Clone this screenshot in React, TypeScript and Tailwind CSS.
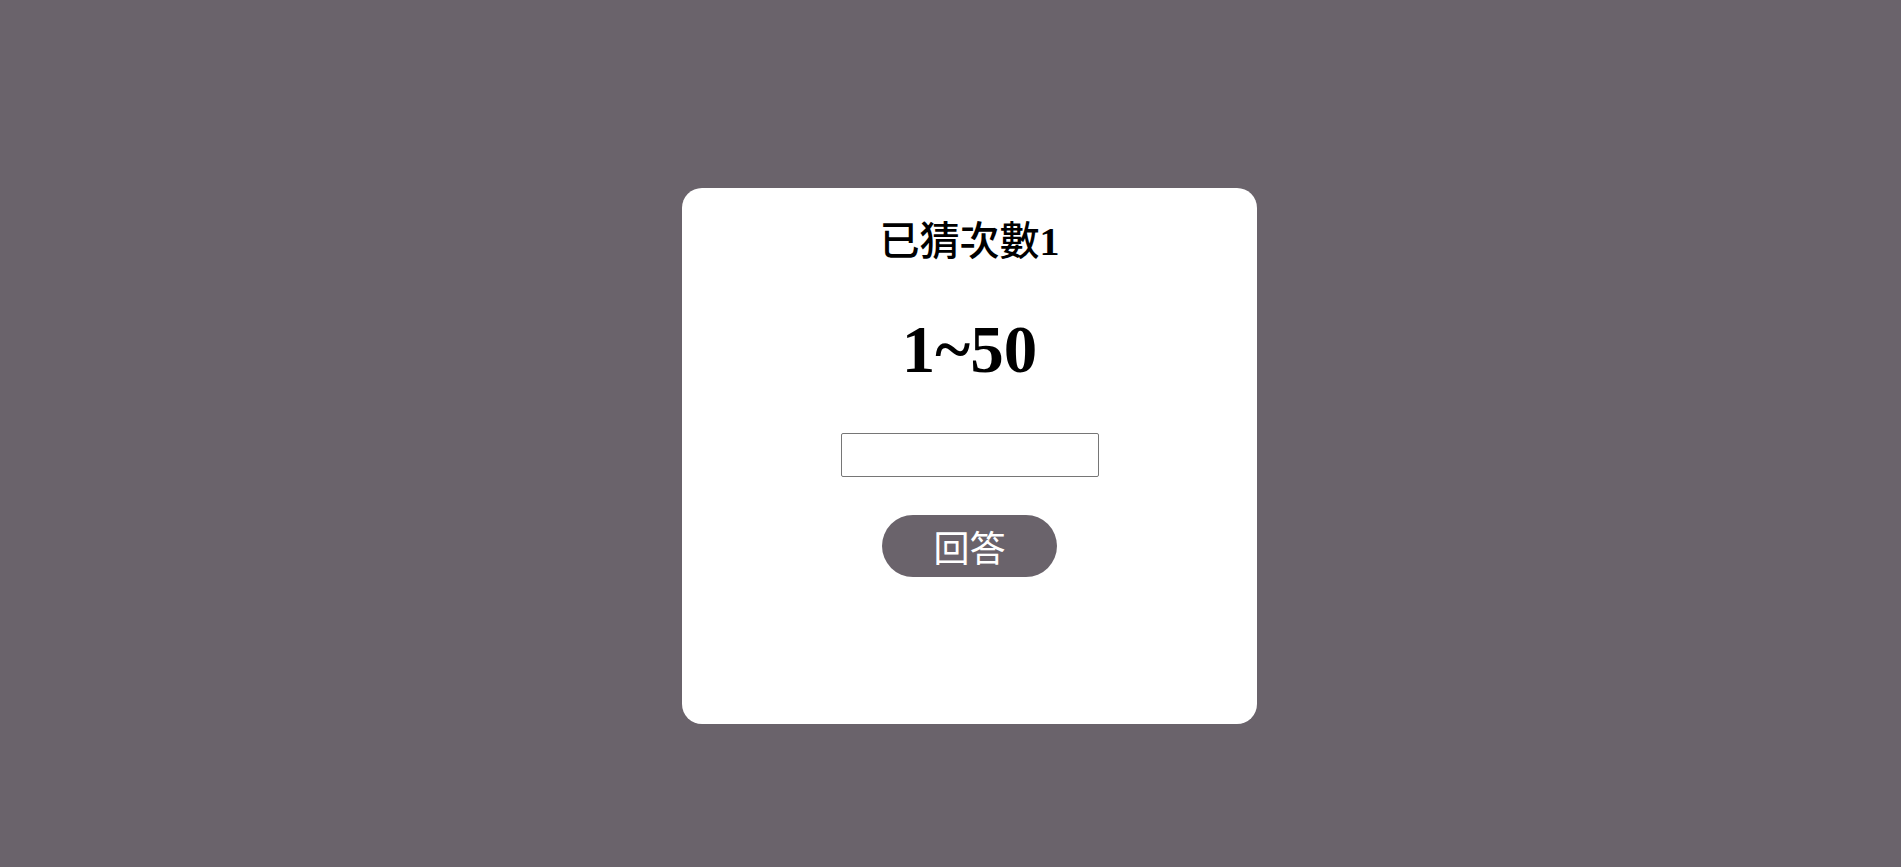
import React from "react";

export default function App() {
  return (
    <div className="min-h-screen w-full bg-[#6a636b] pt-[188px] pl-[682px]">
      <div className="flex h-[536px] w-[575px] flex-col items-center rounded-[20px] bg-white pt-[30px]">
        <h2 className="text-[40px] leading-[48px] font-medium text-black [font-family:'Liberation_Serif','Noto_Sans_CJK_TC',serif]">
          已猜次數<span className="font-bold">1</span>
        </h2>
        <h1 className="mt-[50px] text-[67px] leading-[67px] font-bold text-black [font-family:'Liberation_Serif','Noto_Sans_CJK_TC',serif]">
          1~50
        </h1>
        <input
          type="text"
          className="mt-[50px] h-[44px] w-[258px] rounded-[2px] border border-[#767676] bg-white px-2 text-[20px] outline-none"
        />
        <button
          type="button"
          className="mt-[38px] flex h-[62px] w-[175px] items-center justify-center rounded-full bg-[#6a636b] text-[36px] leading-none text-white [font-family:'Noto_Sans_CJK_TC',sans-serif]"
        >
          回答
        </button>
      </div>
    </div>
  );
}
